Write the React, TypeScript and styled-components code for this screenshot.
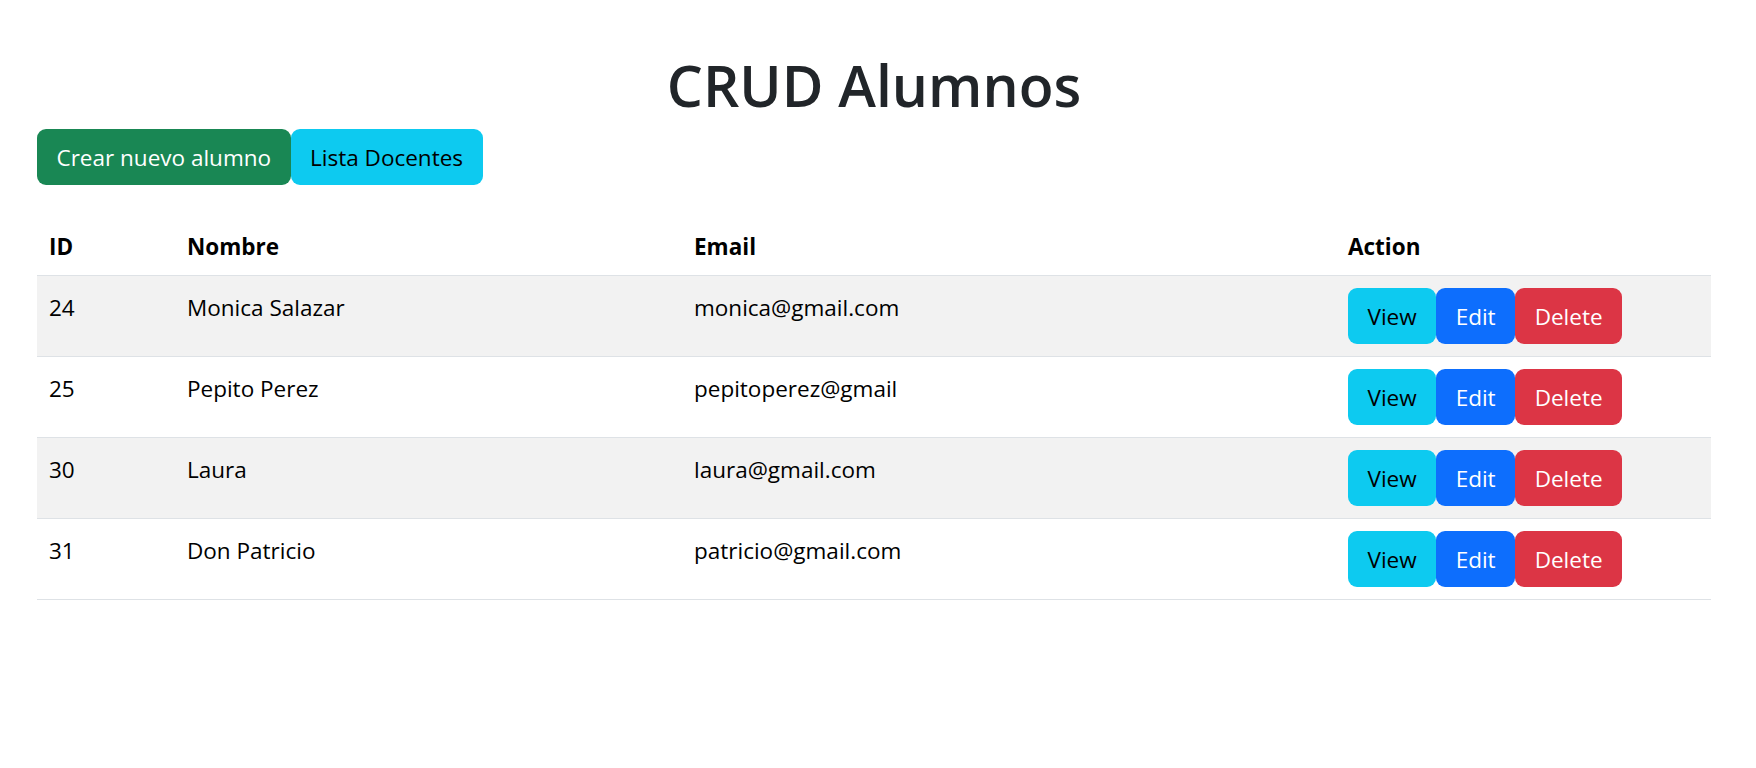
import styled, { createGlobalStyle } from "styled-components";

type Variant = "success" | "info" | "primary" | "danger";

interface Alumno {
  id: number;
  nombre: string;
  email: string;
}

const alumnos: Alumno[] = [
  { id: 24, nombre: "Monica Salazar", email: "monica@gmail.com" },
  { id: 25, nombre: "Pepito Perez", email: "pepitoperez@gmail" },
  { id: 30, nombre: "Laura", email: "laura@gmail.com" },
  { id: 31, nombre: "Don Patricio", email: "patricio@gmail.com" },
];

// colores tipo bootstrap
const variants: Record<Variant, { bg: string; fg: string }> = {
  success: { bg: "#198754", fg: "#ffffff" },
  info: { bg: "#0dcaf0", fg: "#000000" },
  primary: { bg: "#0d6efd", fg: "#ffffff" },
  danger: { bg: "#dc3545", fg: "#ffffff" },
};

const App = () => {
  return (
    <>
      <GlobalStyle />
      <Page>
        <Title>CRUD Alumnos</Title>
        <Toolbar>
          <Button $variant="success">Crear nuevo alumno</Button>
          <Button $variant="info">Lista Docentes</Button>
        </Toolbar>
        <Table>
          <colgroup>
            <col style={{ width: 138 }} />
            <col style={{ width: 507 }} />
            <col style={{ width: 654 }} />
            <col style={{ width: 375 }} />
          </colgroup>
          <thead>
            <tr>
              <Th>ID</Th>
              <Th>Nombre</Th>
              <Th>Email</Th>
              <Th>Action</Th>
            </tr>
          </thead>
          <tbody>
            {alumnos.map((alumno, index) => (
              <Row key={alumno.id} $striped={index % 2 === 0}>
                <Td>{alumno.id}</Td>
                <Td>{alumno.nombre}</Td>
                <Td>{alumno.email}</Td>
                <ActionTd>
                  <Actions>
                    <Button $variant="info">View</Button>
                    <Button $variant="primary">Edit</Button>
                    <Button $variant="danger">Delete</Button>
                  </Actions>
                </ActionTd>
              </Row>
            ))}
          </tbody>
        </Table>
      </Page>
    </>
  );
};

export default App;

const GlobalStyle = createGlobalStyle`
  body {
    margin: 0;
    background: #ffffff;
    font-family: "Open Sans", "Noto Sans", sans-serif;
    color: #212529;
  }
`;

const Page = styled("div")({
  padding: "50px 45px 0 37px",
});

const Title = styled("h1")({
  margin: "0 0 9px",
  textAlign: "center",
  fontSize: 57,
  fontWeight: 600,
  lineHeight: "70px",
  color: "#212529",
});

const Toolbar = styled("div")({
  display: "flex",
});

const Button = styled("button")<{ $variant: Variant }>((props) => ({
  display: "inline-flex",
  alignItems: "center",
  height: 56,
  padding: "1px 19.5px 0",
  border: "none",
  borderRadius: 9,
  fontFamily: "inherit",
  fontSize: 22.5,
  lineHeight: 1.5,
  cursor: "pointer",
  backgroundColor: variants[props.$variant].bg,
  color: variants[props.$variant].fg,
}));

const Table = styled("table")({
  width: "100%",
  marginTop: 30,
  borderCollapse: "collapse",
  tableLayout: "fixed",
  color: "#000000",
  fontSize: 22.5,
  lineHeight: "36px",
});

const Th = styled("th")({
  padding: "14px 12px 10px",
  textAlign: "left",
  fontWeight: 700,
  verticalAlign: "bottom",
  borderBottom: "1px solid #dee2e6",
});

const Row = styled("tr")<{ $striped: boolean }>((props) => ({
  backgroundColor: props.$striped ? "#f2f2f2" : "#ffffff",
  borderBottom: "1px solid #dee2e6",
}));

const Td = styled("td")({
  padding: "14px 12px 10px",
  verticalAlign: "top",
});

const ActionTd = styled("td")({
  padding: 12,
  verticalAlign: "top",
});

const Actions = styled("div")({
  display: "flex",
});
